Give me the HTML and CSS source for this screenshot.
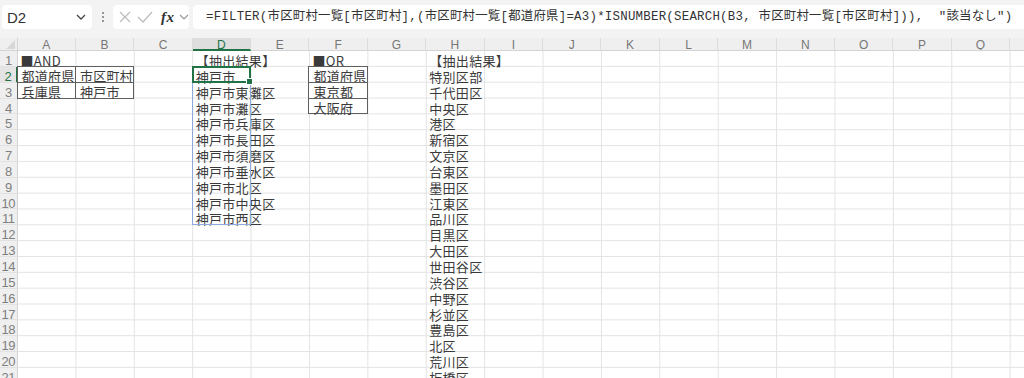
FILE: index.html
```html
<!DOCTYPE html>
<html lang="ja">
<head>
<meta charset="utf-8">
<link rel="stylesheet" href="styles.css">
</head>
<body>
<div class="topbar">
  <div class="namebox">
    <span class="name">D2</span>
    <svg class="chev" width="10" height="6" viewBox="0 0 10 6"><polyline points="1,1 5,5 9,1" fill="none" stroke="#444" stroke-width="1.3"/></svg>
  </div>
  <div class="dots"><span></span><span></span><span></span></div>
  <div class="fnbox">
    <svg width="14" height="14" viewBox="0 0 14 14"><path d="M2 2 L12 12 M12 2 L2 12" stroke="#bdbdbd" stroke-width="1.3" fill="none"/></svg>
    <svg width="16" height="14" viewBox="0 0 16 14"><polyline points="1,7 6,12 15,2" stroke="#bdbdbd" stroke-width="1.3" fill="none"/></svg>
    <span class="fx">fx</span>
    <svg class="chev2" width="10" height="6" viewBox="0 0 10 6"><polyline points="1,1 5,5 9,1" fill="none" stroke="#999" stroke-width="1.2"/></svg>
  </div>
  <div class="formula">=FILTER(市区町村一覧[市区町村],(市区町村一覧[都道府県]=A3)*ISNUMBER(SEARCH(B3, 市区町村一覧[市区町村])),  "該当なし")</div>
</div>

<div class="sheet">
  <div class="corner"><span class="tri"></span></div>
  <div class="ch">A</div><div class="ch">B</div><div class="ch">C</div><div class="ch sel">D</div><div class="ch">E</div><div class="ch">F</div><div class="ch">G</div><div class="ch">H</div><div class="ch">I</div><div class="ch">J</div><div class="ch">K</div><div class="ch">L</div><div class="ch">M</div><div class="ch">N</div><div class="ch">O</div><div class="ch">P</div><div class="ch">Q</div><div class="ch">R</div>

  <div class="rh r1">1</div><div class="rh r2 sel">2</div><div class="rh r3">3</div><div class="rh r4">4</div><div class="rh r5">5</div><div class="rh r6">6</div><div class="rh r7">7</div><div class="rh r8">8</div><div class="rh r9">9</div><div class="rh r10">10</div><div class="rh r11">11</div><div class="rh r12">12</div><div class="rh r13">13</div><div class="rh r14">14</div><div class="rh r15">15</div><div class="rh r16">16</div><div class="rh r17">17</div><div class="rh r18">18</div><div class="rh r19">19</div><div class="rh r20">20</div><div class="rh r21">21</div><div class="rh r22">22</div>

  <div class="grid-bg"></div>

  <!-- AND table -->
  <div class="cell cA r1">■AND</div>
  <div class="cell bd cA r2">都道府県</div>
  <div class="cell bd cB r2">市区町村</div>
  <div class="cell bd cA r3">兵庫県</div>
  <div class="cell bd cB r3">神戸市</div>

  <!-- D results -->
  <div class="cell cD r1">【抽出結果】</div>
  <div class="spill"></div>
  <div class="cell cD r2">神戸市</div>
  <div class="cell cD r3">神戸市東灘区</div>
  <div class="cell cD r4">神戸市灘区</div>
  <div class="cell cD r5">神戸市兵庫区</div>
  <div class="cell cD r6">神戸市長田区</div>
  <div class="cell cD r7">神戸市須磨区</div>
  <div class="cell cD r8">神戸市垂水区</div>
  <div class="cell cD r9">神戸市北区</div>
  <div class="cell cD r10">神戸市中央区</div>
  <div class="cell cD r11">神戸市西区</div>
  <div class="active"></div>

  <!-- OR table -->
  <div class="cell cF r1">■OR</div>
  <div class="cell bd cF r2">都道府県</div>
  <div class="cell bd cF r3">東京都</div>
  <div class="cell bd cF r4">大阪府</div>

  <!-- H results -->
  <div class="cell cH r1">【抽出結果】</div>
  <div class="cell cH r2">特別区部</div>
  <div class="cell cH r3">千代田区</div>
  <div class="cell cH r4">中央区</div>
  <div class="cell cH r5">港区</div>
  <div class="cell cH r6">新宿区</div>
  <div class="cell cH r7">文京区</div>
  <div class="cell cH r8">台東区</div>
  <div class="cell cH r9">墨田区</div>
  <div class="cell cH r10">江東区</div>
  <div class="cell cH r11">品川区</div>
  <div class="cell cH r12">目黒区</div>
  <div class="cell cH r13">大田区</div>
  <div class="cell cH r14">世田谷区</div>
  <div class="cell cH r15">渋谷区</div>
  <div class="cell cH r16">中野区</div>
  <div class="cell cH r17">杉並区</div>
  <div class="cell cH r18">豊島区</div>
  <div class="cell cH r19">北区</div>
  <div class="cell cH r20">荒川区</div>
  <div class="cell cH r21">板橋区</div>
</div>
</body>
</html>
```

FILE: styles.css
```css
html, body {
  margin: 0;
  padding: 0;
  width: 1024px;
  height: 378px;
  overflow: hidden;
  background: #ffffff;
  font-family: "Liberation Sans", "Noto Sans CJK JP", sans-serif;
}

/* ---------- formula bar ---------- */
.topbar {
  height: 38px;
  box-sizing: border-box;
  background: #f3f3f3;
  display: flex;
  align-items: flex-start;
  padding: 5px 0 0 2px;
  overflow: hidden;
}
.namebox {
  width: 90px;
  height: 24px;
  background: #fff;
  border-radius: 4px;
  box-sizing: border-box;
  display: flex;
  align-items: center;
  justify-content: space-between;
  padding: 0 6px 0 5px;
  flex: none;
}
.name {
  font-size: 15px;
  color: #333;
}
.chev { display: block; }
.dots {
  width: 21px;
  height: 24px;
  display: flex;
  flex-direction: column;
  align-items: center;
  justify-content: center;
  gap: 2px;
  flex: none;
}
.dots span {
  width: 2px;
  height: 2px;
  background: #777;
  border-radius: 1px;
}
.fnbox {
  width: 76px;
  height: 24px;
  background: #fff;
  border-radius: 4px;
  box-sizing: border-box;
  display: flex;
  align-items: center;
  padding: 0 3px 0 5px;
  gap: 5px;
  flex: none;
}
.fnbox svg { display: block; flex: none; }
.fx {
  font-family: "Liberation Serif", serif;
  font-style: italic;
  font-weight: bold;
  font-size: 15px;
  color: #333;
  margin-left: 3px;
  letter-spacing: 0.5px;
}
.chev2 { margin-left: -1px; }
.formula {
  margin-left: 4px;
  height: 24px;
  width: 900px;
  flex: none;
  background: #fff;
  border-radius: 4px;
  box-sizing: border-box;
  padding-left: 13px;
  font-family: "Liberation Mono", "Noto Sans CJK JP", monospace;
  font-size: 12.4px;
  letter-spacing: 0.25px;
  line-height: 24px;
  color: #333;
  white-space: pre;
}

/* ---------- sheet ---------- */
.sheet {
  display: grid;
  grid-template-columns: 17.5px repeat(18, 58.4px);
  grid-template-rows: 13px repeat(22, 15.85px);
  height: 340px;
  overflow: hidden;
  font-family: "Noto Sans CJK JP", sans-serif;
}
.corner {
  grid-row: 1;
  grid-column: 1;
  background: #efefef;
  border-bottom: 1px solid #d4d4d4;
  border-right: 1px solid #d4d4d4;
  box-sizing: border-box;
  position: relative;
}
.tri {
  position: absolute;
  right: 2px;
  bottom: 1px;
  width: 0;
  height: 0;
  border-left: 9px solid transparent;
  border-bottom: 9px solid #d7d7d7;
}
.ch {
  grid-row: 1;
  background: #efefef;
  border-bottom: 1px solid #d4d4d4;
  border-right: 1px solid #dcdcdc;
  box-sizing: border-box;
  text-align: center;
  font-family: "Liberation Sans", sans-serif;
  font-size: 12px;
  line-height: 14px;
  color: #777;
  overflow: hidden;
}
.ch.sel {
  background: #dedede;
  color: #217346;
  border-bottom: 2px solid #217346;
}
.rh {
  grid-column: 1;
  background: #efefef;
  border-right: 1px solid #d4d4d4;
  border-bottom: 1px solid #e2e2e2;
  box-sizing: border-box;
  text-align: center;
  font-family: "Liberation Sans", sans-serif;
  font-size: 13px;
  line-height: 16px;
  padding-top: 2px;
  color: #808080;
  letter-spacing: -0.5px;
  overflow: hidden;
}
.rh.sel {
  color: #217346;
  background: #e4e4e4;
  border-right: 2px solid #217346;
}
.grid-bg {
  grid-column: 2 / -1;
  grid-row: 2 / -1;
  background-image:
    linear-gradient(to left, #e3e3e3 1px, transparent 1px),
    linear-gradient(to top, #e3e3e3 1px, transparent 1px);
  background-size: 58.4px 15.85px;
}

.cell {
  box-sizing: border-box;
  padding-left: 3px;
  padding-top: 2px;
  font-size: 13px;
  letter-spacing: 0.3px;
  line-height: 15px;
  color: #3a3a3a;
  white-space: nowrap;
  overflow: visible;
  min-width: 0;
  z-index: 1;
}
.bd {
  border: 1px solid #5f5f5f;
  margin: -1px 0 0 -1px;
  background: #fff;
  line-height: 14px;
  padding-top: 2px;
  padding-left: 4px;
}

.spill {
  grid-column: 5;
  grid-row: 3 / 13;
  border: 1px solid #8ea9db;
  border-top: none;
  margin-left: -1px;
  box-sizing: border-box;
  z-index: 2;
}
.active {
  grid-column: 5;
  grid-row: 3;
  border: 2px solid #217346;
  margin: -1px 0 0 -1px;
  box-sizing: border-box;
  position: relative;
  z-index: 3;
}
.active::after {
  content: "";
  position: absolute;
  right: -4px;
  bottom: -4px;
  width: 5px;
  height: 5px;
  background: #217346;
  border: 1px solid #fff;
}

/* column placement */
.cA { grid-column: 2; }
.cB { grid-column: 3; }
.cD { grid-column: 5; }
.cF { grid-column: 7; }
.cH { grid-column: 9; }

/* row placement */
.r1 { grid-row: 2; }
.r2 { grid-row: 3; }
.r3 { grid-row: 4; }
.r4 { grid-row: 5; }
.r5 { grid-row: 6; }
.r6 { grid-row: 7; }
.r7 { grid-row: 8; }
.r8 { grid-row: 9; }
.r9 { grid-row: 10; }
.r10 { grid-row: 11; }
.r11 { grid-row: 12; }
.r12 { grid-row: 13; }
.r13 { grid-row: 14; }
.r14 { grid-row: 15; }
.r15 { grid-row: 16; }
.r16 { grid-row: 17; }
.r17 { grid-row: 18; }
.r18 { grid-row: 19; }
.r19 { grid-row: 20; }
.r20 { grid-row: 21; }
.r21 { grid-row: 22; }
.r22 { grid-row: 23; }
```
